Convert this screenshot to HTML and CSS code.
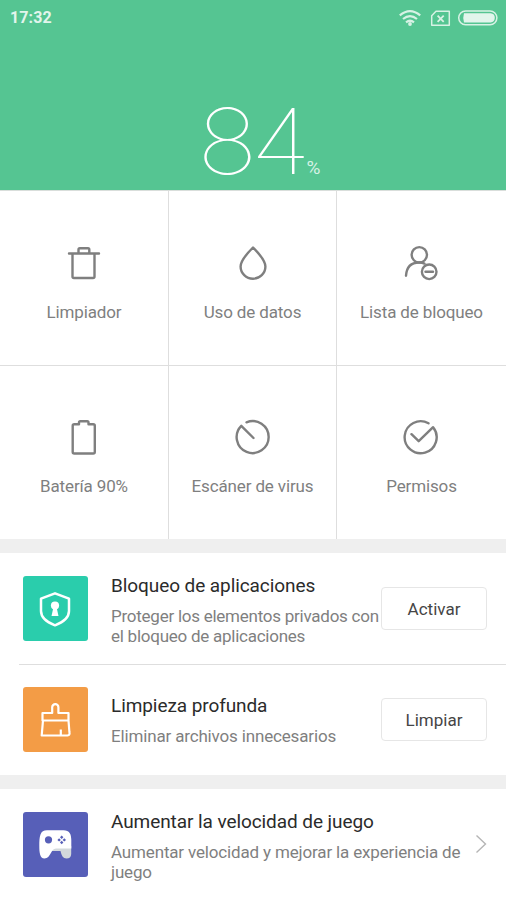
FILE: index.html
```html
<!DOCTYPE html>
<html lang="es">
<head>
<meta charset="utf-8">
<title>Seguridad</title>
<link rel="stylesheet" href="styles.css">
</head>
<body>
<header class="hero">
  <div class="status">
    <span class="time">17:32</span>
    <svg class="status-icons" width="102" height="20" viewBox="0 0 102 20" fill="none" stroke="#d8f2e5">
      <g stroke-width="2.2">
        <path d="M3.8 7.400Q14 -1.200 24.200 7.400"/>
        <path d="M7 11Q14 5.200 21 11"/>
        <path d="M10 14.300Q14 11.200 18 14.300"/>
      </g>
      <circle cx="14" cy="16" r="1.9" fill="#d8f2e5" stroke="none"/>
      <path d="M40 3.300H53.300V17.200H35.700V7.700Z" stroke-width="1.5" stroke-linejoin="round"/>
      <path d="M41.600 7.600L47.700 13.800M47.700 7.600L41.600 13.800" stroke-width="1.800"/>
      <rect x="62.700" y="2.900" width="38.200" height="13.800" rx="6.900" stroke-width="1.500"/>
      <path d="M68 5.200H94.600Q98.800 5.600 98.800 9.800T94.600 14.400H68Q66.500 9.800 68 5.200Z" fill="#e2f5ec" stroke="none"/>
    </svg>
  </div>
  <div class="score"><span class="score-value">84</span><span class="score-unit">%</span></div>
</header>

<main>
<section class="tools">
  <div class="tool">
    <svg class="icon" viewBox="0 0 36 36"><path d="M3 8.500H33M6.500 8.500V31.500Q6.500 33 8 33H27Q28.500 33 28.500 31.500V8.500M12.500 8V4.500Q12.500 3.200 13.800 3.200H22Q23.300 3.200 23.300 4.500V8"/></svg>
    <span class="label">Limpiador</span>
  </div>
  <div class="tool">
    <svg class="icon" viewBox="0 0 36 36"><path d="M18 2.500C16.500 4 5.600 15 5.600 21.500A12.400 12.200 0 0 0 30.400 21.500C30.400 15 19.500 4 18 2.500Z"/></svg>
    <span class="label">Uso de datos</span>
  </div>
  <div class="tool">
    <svg class="icon icon-left" viewBox="0 0 36 36"><circle cx="17.300" cy="9.800" r="7.700"/><path d="M4 30.700C4.600 22.500 8.500 17.500 17 17.500Q20 17.400 22.500 18.600"/><circle cx="27.200" cy="26.800" r="7.300"/><path d="M23.500 26.800H31"/></svg>
    <span class="label">Lista de bloqueo</span>
  </div>
  <div class="tool">
    <svg class="icon" viewBox="0 0 36 36"><path d="M13 5.300V3.500Q13 2.200 14.300 2.200H21.200Q22.500 2.200 22.500 3.500V5.300H27.200Q28.800 5.300 28.800 6.800V33Q28.800 34.500 27.200 34.500H8.300Q6.700 34.500 6.700 33V6.800Q6.700 5.300 8.300 5.300Z"/></svg>
    <span class="label">Batería 90%</span>
  </div>
  <div class="tool">
    <svg class="icon" viewBox="0 0 36 36"><path d="M11.500 3.300A16 16 0 1 1 6.300 6.800L18.500 19"/></svg>
    <span class="label">Escáner de virus</span>
  </div>
  <div class="tool">
    <svg class="icon icon-left" viewBox="0 0 36 36"><path d="M26.500 4.300A16 16 0 1 0 31.100 8.200L16.700 22.200L9.500 15.200"/></svg>
    <span class="label">Permisos</span>
  </div>
</section>

<section class="card">
  <article class="row row-lock">
    <svg class="tile" viewBox="0 0 65 65"><rect width="65" height="65" rx="3" fill="#2acdac"/><path d="M32 17.300L18 22.700V35Q18 44 32 49.300Q46 44 46 35V22.700Z" fill="none" stroke="#fff" stroke-width="2.500" stroke-linejoin="round"/><circle cx="32" cy="29.500" r="4.100" fill="#fff"/><path d="M30.500 31H33.500L35.500 40H28.500Z" fill="#fff"/></svg>
    <div class="copy"><h2>Bloqueo de aplicaciones</h2><p>Proteger los elementos privados con<br>el bloqueo de aplicaciones</p></div>
    <button class="action">Activar</button>
  </article>
  <article class="row row-clean">
    <svg class="tile" viewBox="0 0 65 65"><rect width="65" height="65" rx="3" fill="#f39c46"/><g fill="none" stroke="#fff" stroke-width="2.200" stroke-linejoin="round"><path d="M19.500 33.500V26H29.200V20.300A3.100 3.100 0 0 1 35.400 20.300V26H45.500V33.500ZM20 33.500L18.700 48.500H44.500Q47.200 48.200 46.400 45L45.500 33.500M37.800 42.500V48"/></g></svg>
    <div class="copy"><h2>Limpieza profunda</h2><p>Eliminar archivos innecesarios</p></div>
    <button class="action">Limpiar</button>
  </article>
</section>

<section class="card">
  <article class="row row-game">
    <svg class="tile" viewBox="0 0 65 65"><rect width="65" height="65" rx="3" fill="#575fb8"/><path d="M27 34H48.200V42Q48 46.500 43.500 46.500C40 46.500 38.500 43.500 37.500 39H28Z" fill="#d3d9dc"/><path d="M24 18.200H40.500C46.500 18.200 48.300 22 48.300 28V36.500H33C27.500 36.500 28 46.500 21.500 46.500C16.800 46.500 16.300 40 16.300 34C16.300 24 17 18.200 24 18.200Z" fill="#fff"/><circle cx="25.500" cy="27.800" r="3.600" fill="#575fb8"/><path fill="#575fb8" d="M38.700 23.600l1.700 1.700-1.700 1.700-1.700-1.700zM38.700 28.800l1.700 1.700-1.700 1.700-1.700-1.700zM36.100 26.200l1.700 1.700-1.700 1.700-1.700-1.700zM41.300 26.200l1.700 1.700-1.700 1.700-1.700-1.700z"/></svg>
    <div class="copy"><h2>Aumentar la velocidad de juego</h2><p>Aumentar velocidad y mejorar la experiencia de<br>juego</p></div>
    <svg class="chevron" viewBox="0 0 12 20"><path d="M1.500 1.500L10.500 10L1.500 18.500"/></svg>
  </article>
</section>
</main>
</body>
</html>
```

FILE: styles.css
```css
* { box-sizing: border-box; }
body {
  margin: 0;
  width: 506px;
  height: 900px;
  overflow: hidden;
  background: #fff;
  font-family: Roboto, "Liberation Sans", sans-serif;
  color: #2b2b2b;
}
.hero {
  height: 190px;
  background: #55c592;
  color: #fff;
}
.status {
  height: 36px;
  padding: 8px 8px 0 10px;
  display: flex;
  justify-content: space-between;
}
.time {
  font-size: 16px;
  line-height: 20px;
  font-weight: 700;
  letter-spacing: .1px;
  color: #e2f5ec;
}
.score {
  display: flex;
  align-items: baseline;
  height: 154px;
  padding: 60px 0 0 196.5px;
}
.score-value {
  width: 110px;
  font-family: Inter, Roboto, sans-serif;
  font-weight: 100;
  font-size: 91px;
  line-height: 91px;
  letter-spacing: -6.5px;
  white-space: nowrap;
  transform: scaleX(1.12);
  transform-origin: left;
}
.score-unit { font-size: 19px; line-height: 20px; color: #d8f2e5; }

.tools {
  display: grid;
  grid-template-columns: 169px 168px 169px;
  grid-template-rows: 175px 173px;
  border-top: 1px solid #d9dedb;
  height: 349px;
}
.tool {
  display: flex;
  flex-direction: column;
  align-items: center;
  padding-top: 53px;
  border-right: 1px solid #dedede;
}
.tool:nth-child(3n) { border-right: 0; }
.tool:nth-child(-n+3) { padding-top: 54px; border-bottom: 1px solid #dedede; }
.icon {
  width: 36px;
  height: 36px;
  fill: none;
  stroke: #7f7f7f;
  stroke-width: 2.4;
  stroke-linecap: round;
  stroke-linejoin: round;
}
.icon-left { margin-right: 2.5px; }
.label {
  margin-top: 20px;
  font-size: 17px;
  line-height: 22px;
  letter-spacing: -.14px;
  color: #7f7f7f;
  white-space: nowrap;
}
.card {
  border-top: 14px solid #efefef;
}
.row {
  display: flex;
  margin-left: 19px;
  padding: 23px 19px 0 4px;
  height: 111px;
}
.row-lock { height: 112px; border-bottom: 1px solid #dedede; }
.row-clean { height: 110px; padding-top: 22px; }
.tile { width: 65px; height: 65px; flex: none; }
.copy { flex: 1; min-width: 0; margin-left: 23px; white-space: nowrap; }
h2 {
  margin: -2px 0 0;
  font-size: 19px;
  line-height: 24px;
  font-weight: 400;
  letter-spacing: -.08px;
}
p {
  margin: 8px 0 0;
  font-size: 17px;
  line-height: 20px;
  letter-spacing: -.16px;
  color: #7f7f7f;
}
.row-lock p { letter-spacing: -.25px; }
.row-clean h2 { margin-top: 7px; }
.action {
  flex: none;
  width: 106px;
  height: 43px;
  margin-top: 11px;
  padding: 0;
  border: 1px solid #e6e6e6;
  border-radius: 4px;
  background: #fff;
  font: 400 17px/22px Roboto, sans-serif;
  color: #454545;
}
.chevron {
  flex: none;
  width: 12px;
  height: 20px;
  margin-top: 22px;
  fill: none;
  stroke: #b5b5b5;
  stroke-width: 1.4;
}
```
